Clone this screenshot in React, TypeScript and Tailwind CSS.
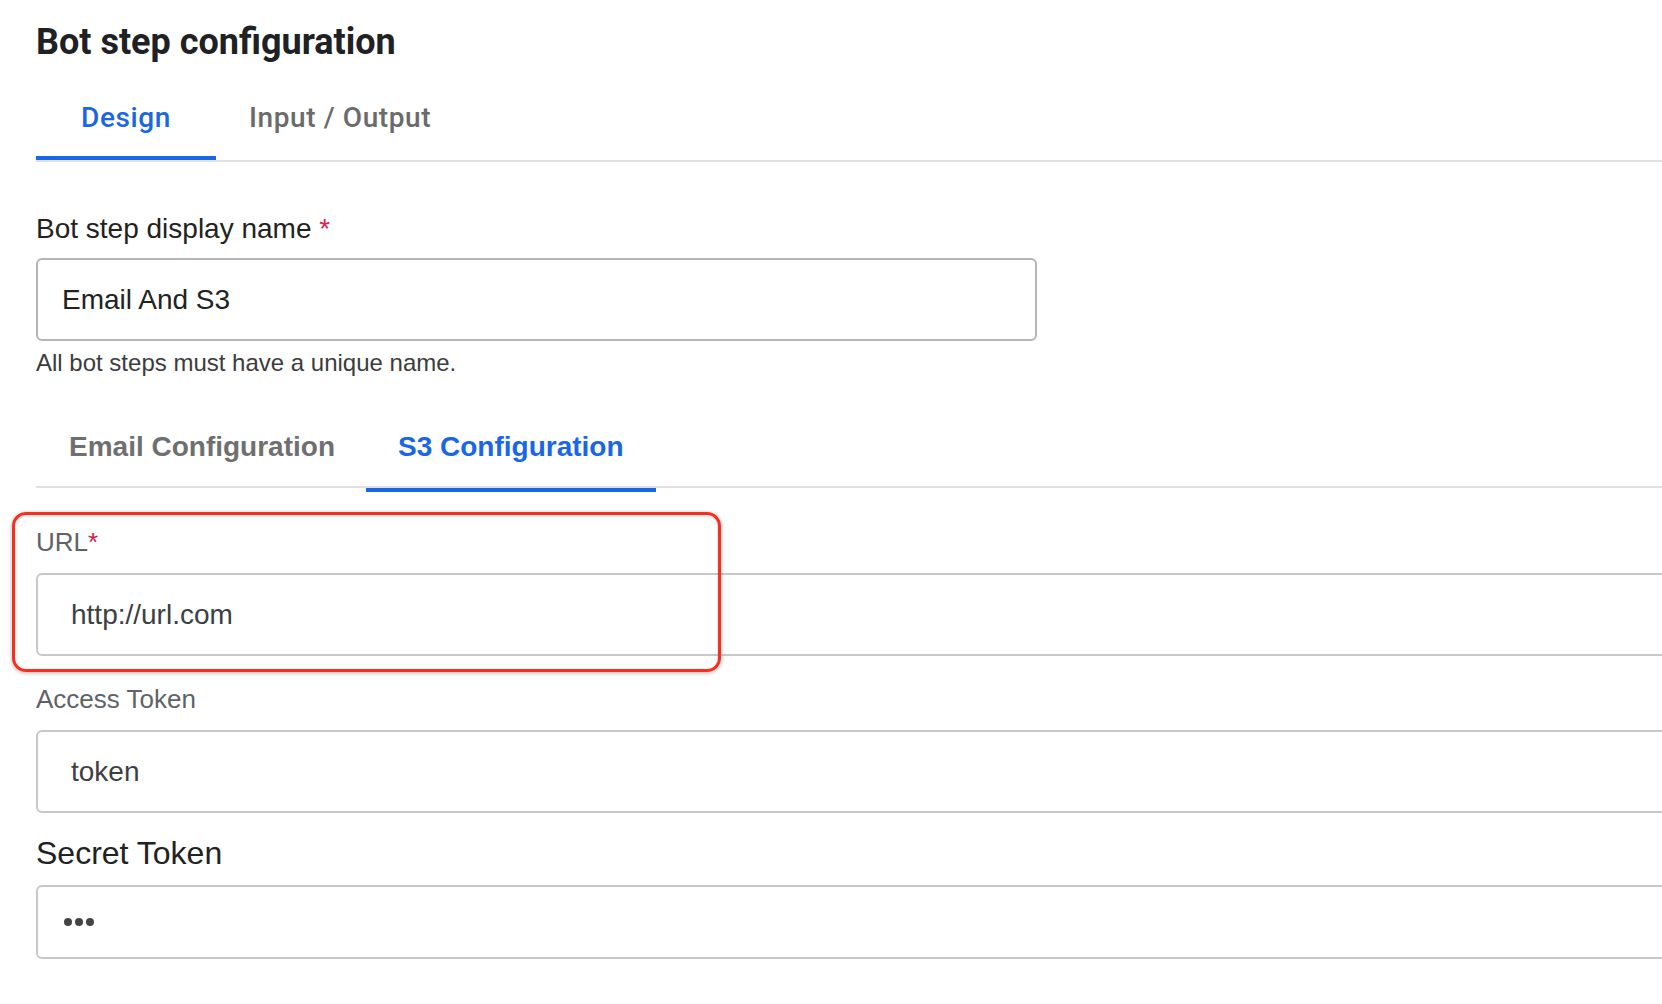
import React from 'react';

const blue = 'text-[#1966e6]';

const TopTabs: React.FC = () => (
  <div className="flex border-b-2 border-[#e0e0e0] font-['Roboto',sans-serif] font-medium text-[28px] leading-[34px] tracking-[0.6px]">
    <div className={`w-[180px] text-center pt-[38px] pb-[21px] border-b-4 border-[#1966e6] ${blue}`}>Design</div>
    <div className="pl-[33px] pt-[38px] pb-[25px] text-[#6b6b6b]">Input / Output</div>
  </div>
);

const ConfigTabs: React.FC = () => (
  <div className="mt-[54px]">
    <div className="flex font-bold text-[28px] leading-[32px]">
      <div className="pl-[33px] pr-[30px] pb-[23px] text-[#6f6f6f]">Email Configuration</div>
      <div className={`px-[33px] pb-[23px] ${blue}`}>S3 Configuration</div>
    </div>
    <div className="h-0.5 bg-[#e0e0e0]" />
    <div className="ml-[330px] w-[290px] h-1 bg-[#1966e6]" />
  </div>
);

interface FieldProps {
  label: string;
  value: string;
  required?: boolean;
}

const S3Field: React.FC<FieldProps> = ({ label, value, required }) => (
  <>
    <label className="block text-[26px] leading-[30px] text-[#5f6368]">
      {label}
      {required && <span className="text-[#c8204a]">*</span>}
    </label>
    <input
      readOnly
      value={value}
      className="block mt-[16px] w-[1700px] h-[83px] border-2 border-[#c8c8cc] rounded-[6px] pl-[33px] text-[28px] text-[#3c4043] outline-none"
    />
  </>
);

export default function App() {
  return (
    <div className="w-[1662px] h-[1004px] overflow-hidden bg-white font-['Liberation_Sans',Arial,sans-serif]">
      <div className="pl-9">
        <h1 className="font-['Roboto',sans-serif] font-bold text-[36px] leading-[42px] text-[#202124] pt-[21px]">
          Bot step configuration
        </h1>

        <TopTabs />

        {/* display name */}
        <div className="pt-[51px]">
          <label className="block text-[28px] leading-[32px] text-[#222]">
            Bot step display name <span className="text-[#e0234e]">*</span>
          </label>
          <input
            readOnly
            value="Email And S3"
            className="block mt-[13px] w-[1001px] h-[83px] border-2 border-[#b5b5b5] rounded-[6px] pl-[24px] text-[28px] text-[#222] outline-none"
          />
          <p className="mt-[8px] text-[24px] leading-[28px] text-[#3c3c3c]">All bot steps must have a unique name.</p>
        </div>

        <ConfigTabs />

        {/* url, highlighted */}
        <div className="relative mt-[35px]">
          <S3Field label="URL" value="http://url.com" required />
          <div className="pointer-events-none absolute -top-[15px] -left-[24px] w-[709px] -bottom-[16px] border-[3px] border-[#f5301f] rounded-[14px] shadow-[0_1px_4px_rgba(0,0,0,0.3),inset_0_1px_3px_rgba(0,0,0,0.2)]" />
        </div>

        <div className="mt-[28px]">
          <S3Field label="Access Token" value="token" />
        </div>

        <div className="mt-[22px]">
          <label className="block text-[32px] leading-[36px] text-[#222]">Secret Token</label>
          <div className="mt-[14px] w-[1700px] h-[74px] border-2 border-[#c8c8cc] rounded-[6px] pl-[26px] flex items-center gap-[3px]">
            <span className="w-2 h-2 rounded-full bg-[#444]" />
            <span className="w-2 h-2 rounded-full bg-[#444]" />
            <span className="w-2 h-2 rounded-full bg-[#444]" />
          </div>
        </div>
      </div>
    </div>
  );
}
